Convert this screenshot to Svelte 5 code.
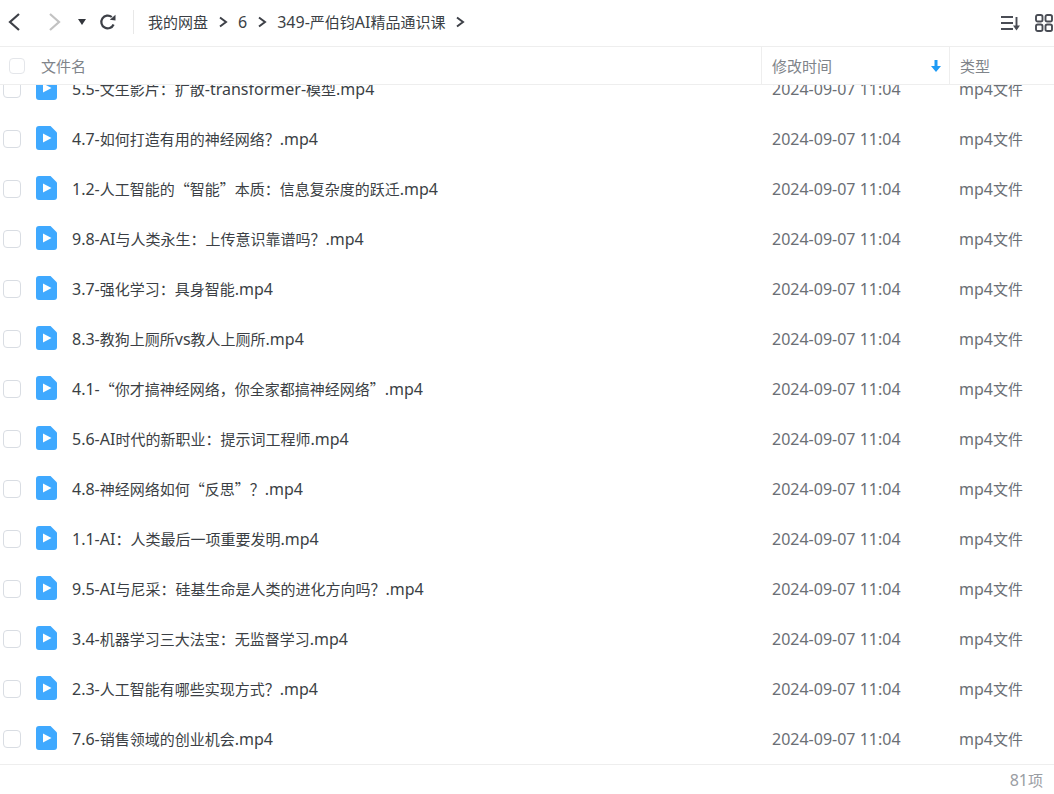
<script>
  const files = [
    '5.5-文生影片：扩散-transformer-模型.mp4',
    '4.7-如何打造有用的神经网络？.mp4',
    '1.2-人工智能的“智能”本质：信息复杂度的跃迁.mp4',
    '9.8-AI与人类永生：上传意识靠谱吗？.mp4',
    '3.7-强化学习：具身智能.mp4',
    '8.3-教狗上厕所vs教人上厕所.mp4',
    '4.1-“你才搞神经网络，你全家都搞神经网络”.mp4',
    '5.6-AI时代的新职业：提示词工程师.mp4',
    '4.8-神经网络如何“反思”？.mp4',
    '1.1-AI：人类最后一项重要发明.mp4',
    '9.5-AI与尼采：硅基生命是人类的进化方向吗？.mp4',
    '3.4-机器学习三大法宝：无监督学习.mp4',
    '2.3-人工智能有哪些实现方式？.mp4',
    '7.6-销售领域的创业机会.mp4',
  ]
  const crumbs = ['我的网盘', '6', '349-严伯钧AI精品通识课']

  // latin runs sit a little larger than the CJK ones, like the original UI font
  function runs(text) {
    return text.match(/[\x00-\x7f]+|[^\x00-\x7f]+/g) || []
  }
</script>

{#snippet mixed(text)}
  {#each runs(text) as run}<span class={run.charCodeAt(0) < 128 ? 'latin' : 'cjk'}>{run}</span>{/each}
{/snippet}

<div class="page">
  <header class="toolbar">
    <div class="nav">
      <svg class="back" width="16" height="20" viewBox="0 0 16 20"><path d="M13 2 4 10l9 8" /></svg>
      <svg class="forward" width="16" height="20" viewBox="0 0 16 20"><path d="M3 2l9 8-9 8" /></svg>
      <svg class="caret" width="10" height="8" viewBox="0 0 10 8"><path d="M1 1h8L5 7z" /></svg>
      <svg class="reload" width="18" height="18" viewBox="0 0 18 18">
        <path d="M14.6 11.500A6.400 6.400 0 1 1 12.800 4" />
        <path class="tip" d="M10.800 6.800 16.500 7.400V1.800z" />
      </svg>
    </div>
    <nav class="crumbs">
      {#each crumbs as crumb}
        <span class="crumb">{@render mixed(crumb)}</span>
        <svg width="10" height="12" viewBox="0 0 10 12"><path d="M2 1.500 8 6l-6 4.500" /></svg>
      {/each}
    </nav>
    <div class="views">
      <svg width="21" height="18" viewBox="0 0 21 18">
        <path d="M1 3h12M1 9h12M1 15h12" />
        <path d="M16.500 3v10" />
        <path class="tip" d="M13 11.500h7l-3.500 5z" />
      </svg>
      <svg width="18" height="18" viewBox="0 0 18 18">
        <rect x="1" y="1" width="6.500" height="6.500" rx="1.800" />
        <rect x="10.500" y="1" width="6.500" height="6.500" rx="1.800" />
        <rect x="1" y="10.500" width="6.500" height="6.500" rx="1.800" />
        <rect x="10.500" y="10.500" width="6.500" height="6.500" rx="1.800" />
      </svg>
    </div>
  </header>

  <div class="head">
    <div class="col-name">
      <span class="check head-check"></span>
      <span class="cjk">文件名</span>
    </div>
    <div class="col-time">
      <span class="cjk">修改时间</span>
      <svg width="10" height="12" viewBox="0 0 10 12"><path d="M3.500 0h3v6H10L5 12 0 6h3.500z" /></svg>
    </div>
    <div class="col-type"><span class="cjk">类型</span></div>
  </div>

  <div class="list">
    <div class="rows">
      {#each files as file}
        <div class="row">
          <div class="col-name">
            <span class="check"></span>
            <svg class="file" width="21" height="24" viewBox="0 0 21 24">
              <path class="sheet" d="M3 0h11.500L21 6.500V21a3 3 0 0 1-3 3H3a3 3 0 0 1-3-3V3a3 3 0 0 1 3-3z" />
              <path class="play" d="M7 7.500 15.500 12 7 16.500z" />
            </svg>
            <span class="title">{@render mixed(file)}</span>
          </div>
          <div class="col-time date">{@render mixed('2024-09-07 11:04')}</div>
          <div class="col-type kind">{@render mixed('mp4文件')}</div>
        </div>
      {/each}
    </div>
  </div>

  <footer class="foot">{@render mixed('81项')}</footer>
</div>

<style>
  :global(body) {
    background: #fff;
    overflow: hidden;
  }

  .page {
    display: flex;
    flex-direction: column;
    height: 794px;
    font-family: "Noto Sans", "Noto Sans CJK SC", sans-serif;
    font-size: 16px;
    line-height: 22px;
    color: #3b3f45;
  }

  .latin {
    font-size: 16px;
  }

  .cjk {
    font-family: "Noto Sans CJK SC", sans-serif;
    font-size: 15px;
  }

  .toolbar {
    flex: none;
    display: flex;
    align-items: center;
    height: 44px;
    padding-bottom: 2px;
    border-bottom: 1px solid #eeeeee;
  }

  .nav {
    display: flex;
    align-items: center;
    width: 134px;
    height: 24px;
    box-sizing: border-box;
    border-right: 1px solid #e8e8e8;
  }

  .nav svg {
    flex: none;
    fill: none;
    stroke-width: 2.200;
  }

  .back {
    margin-left: 6px;
    stroke: #3d4047;
  }

  .forward {
    margin-left: 25px;
    stroke: #c2c2c2;
  }

  .nav .caret {
    margin-left: 14px;
    fill: #33363c;
    stroke: none;
  }

  .reload {
    margin-left: 12px;
    stroke: #3d4047;
  }

  .nav .reload .tip {
    fill: #3d4047;
    stroke: none;
  }

  .crumbs {
    display: flex;
    align-items: center;
    gap: 10px;
    margin-left: 14px;
    color: #3b3f45;
  }

  .crumbs svg {
    fill: none;
    stroke: #3d4047;
    stroke-width: 2;
  }

  .views {
    display: flex;
    align-items: center;
    gap: 14px;
    margin: 2px 0 0 auto;
    padding-right: 1px;
  }

  .views svg {
    fill: none;
    stroke: #4a4d55;
    stroke-width: 1.900;
  }

  .views .tip {
    fill: #4a4d55;
    stroke: none;
  }

  .head {
    flex: none;
    display: flex;
    height: 37px;
    border-bottom: 1px solid #eeeeee;
    color: #80848a;
  }

  .head > div {
    display: flex;
    align-items: center;
  }

  .head .col-time,
  .head .col-type {
    border-left: 1px solid #eeeeee;
  }

  .col-name {
    display: flex;
    align-items: center;
    width: 761px;
    flex: none;
  }

  .col-time {
    width: 188px;
    flex: none;
    box-sizing: border-box;
    padding-left: 11px;
  }

  .head .col-time {
    justify-content: space-between;
    padding: 0 8px 0 10px;
  }

  .head .col-time svg {
    fill: #1e9bf5;
  }

  .col-type {
    flex: 1;
    padding-left: 10px;
  }

  .check {
    flex: none;
    width: 18px;
    height: 18px;
    box-sizing: border-box;
    margin-left: 3px;
    border: 1px solid #d9dde3;
    border-radius: 4px;
    background: #fff;
  }

  .head-check {
    width: 16px;
    height: 16px;
    margin: 0 16px 0 9px;
    border-color: #e4e6ea;
  }

  .list {
    flex: 1;
    min-height: 0;
    overflow: hidden;
  }

  .rows {
    margin-top: -21px;
  }

  .row {
    display: flex;
    align-items: center;
    height: 50px;
  }

  .file {
    flex: none;
    margin-left: 15px;
    margin-top: -2px;
  }

  .sheet {
    fill: #3fa9ff;
  }

  .play {
    fill: #fff;
  }

  .title {
    margin-left: 15px;
    white-space: nowrap;
  }

  .date,
  .kind {
    color: #6b6f75;
  }

  .foot {
    flex: none;
    height: 29px;
    border-top: 1px solid #eeeeee;
    display: flex;
    align-items: center;
    justify-content: flex-end;
    padding-right: 11px;
    color: #9a9da3;
  }
</style>
